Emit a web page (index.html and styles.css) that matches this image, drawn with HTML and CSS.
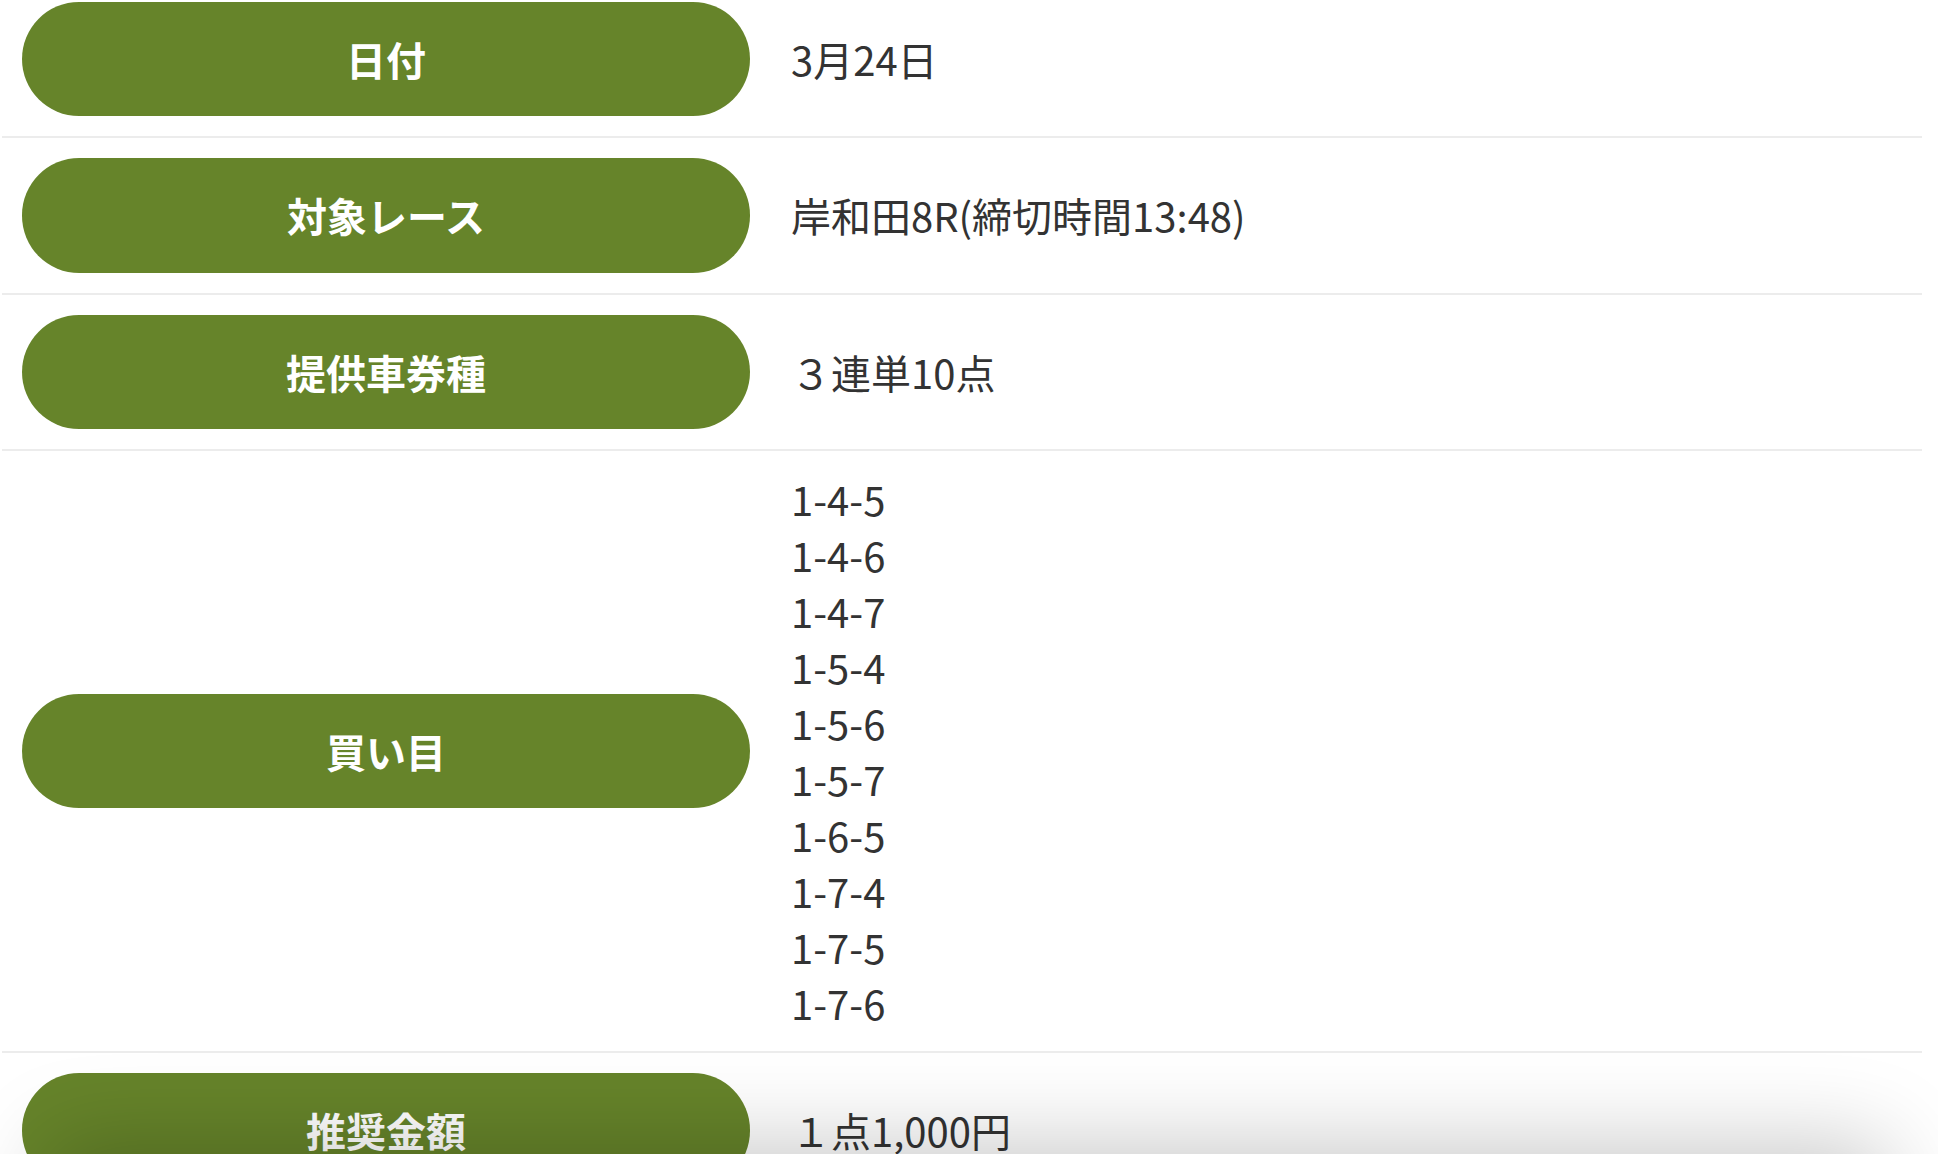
FILE: index.html
```html
<!DOCTYPE html>
<html lang="ja">
<head>
<meta charset="utf-8">
<title>予想</title>
<link rel="stylesheet" href="styles.css">
</head>
<body>
<div class="table">
  <div class="row">
    <div class="label">日付</div>
    <div class="value">3月24日</div>
  </div>
  <div class="row">
    <div class="label">対象レース</div>
    <div class="value">岸和田8R(締切時間13:48)</div>
  </div>
  <div class="row">
    <div class="label">提供車券種</div>
    <div class="value">３連単10点</div>
  </div>
  <div class="row">
    <div class="label">買い目</div>
    <div class="value list">
      <div>1-4-5</div>
      <div>1-4-6</div>
      <div>1-4-7</div>
      <div>1-5-4</div>
      <div>1-5-6</div>
      <div>1-5-7</div>
      <div>1-6-5</div>
      <div>1-7-4</div>
      <div>1-7-5</div>
      <div>1-7-6</div>
    </div>
  </div>
  <div class="row">
    <div class="label">推奨金額</div>
    <div class="value">１点1,000円</div>
  </div>
</div>
<div class="bottom-shade"></div>
</body>
</html>
```

FILE: styles.css
```css
html, body {
  margin: 0;
  padding: 0;
  background: #ffffff;
  overflow: hidden;
}

body {
  font-family: "Noto Sans CJK JP", "Noto Sans", sans-serif;
  color: #333333;
}

.table {
  width: 1920px;
  margin: -18.5px 0 0 2px;
}

.row {
  display: flex;
  align-items: center;
  padding: 20px 0 20px 20px;
  border-bottom: 2px solid #ececec;
}

.label {
  flex: 0 0 728px;
  height: 114.5px;
  border-radius: 57.25px;
  background: #66842a;
  color: #ffffff;
  font-weight: 700;
  font-size: 40px;
  display: flex;
  align-items: center;
  justify-content: center;
}

.value {
  margin-left: 41px;
  font-size: 40px;
  line-height: 56px;
}

.bottom-shade {
  position: fixed;
  left: 60px;
  right: 60px;
  top: 100%;
  height: 120px;
  box-shadow: 0 0 90px 10px rgba(0, 0, 0, 0.22);
}
```
